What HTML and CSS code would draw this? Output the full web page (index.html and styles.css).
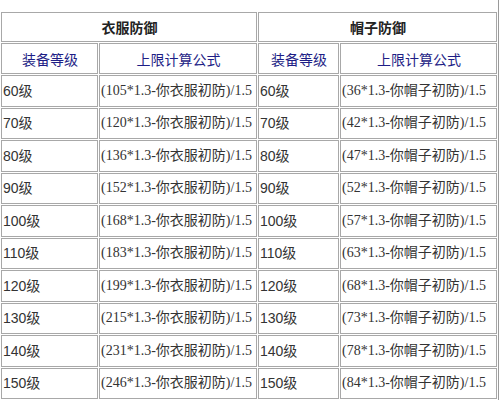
FILE: index.html
```html
<!DOCTYPE html>
<html>
<head>
<meta charset="utf-8">
<link rel="stylesheet" href="styles.css">
</head>
<body>
<div class="wrap">
<table class="grid">
<colgroup><col class="c1"><col class="c2"><col class="c3"><col class="c4"></colgroup>
<tr class="h1"><th colspan="2">衣服防御</th><th colspan="2">帽子防御</th></tr>
<tr class="h2"><td>装备等级</td><td>上限计算公式</td><td>装备等级</td><td>上限计算公式</td></tr>
<tr><td class="lv">60级</td><td class="f">(105*1.3-你衣服初防)/1.5</td><td class="lv">60级</td><td class="f">(36*1.3-你帽子初防)/1.5</td></tr>
<tr><td class="lv">70级</td><td class="f">(120*1.3-你衣服初防)/1.5</td><td class="lv">70级</td><td class="f">(42*1.3-你帽子初防)/1.5</td></tr>
<tr><td class="lv">80级</td><td class="f">(136*1.3-你衣服初防)/1.5</td><td class="lv">80级</td><td class="f">(47*1.3-你帽子初防)/1.5</td></tr>
<tr><td class="lv">90级</td><td class="f">(152*1.3-你衣服初防)/1.5</td><td class="lv">90级</td><td class="f">(52*1.3-你帽子初防)/1.5</td></tr>
<tr><td class="lv">100级</td><td class="f">(168*1.3-你衣服初防)/1.5</td><td class="lv">100级</td><td class="f">(57*1.3-你帽子初防)/1.5</td></tr>
<tr><td class="lv">110级</td><td class="f">(183*1.3-你衣服初防)/1.5</td><td class="lv">110级</td><td class="f">(63*1.3-你帽子初防)/1.5</td></tr>
<tr><td class="lv">120级</td><td class="f">(199*1.3-你衣服初防)/1.5</td><td class="lv">120级</td><td class="f">(68*1.3-你帽子初防)/1.5</td></tr>
<tr><td class="lv">130级</td><td class="f">(215*1.3-你衣服初防)/1.5</td><td class="lv">130级</td><td class="f">(73*1.3-你帽子初防)/1.5</td></tr>
<tr><td class="lv">140级</td><td class="f">(231*1.3-你衣服初防)/1.5</td><td class="lv">140级</td><td class="f">(78*1.3-你帽子初防)/1.5</td></tr>
<tr><td class="lv">150级</td><td class="f">(246*1.3-你衣服初防)/1.5</td><td class="lv">150级</td><td class="f">(84*1.3-你帽子初防)/1.5</td></tr>
</table>
</div>
</body>
</html>
```
FILE: styles.css
```css
html, body {
  margin: 0;
  padding: 0;
  background: #fff;
}
body {
  font-family: "Liberation Serif", "Noto Sans CJK SC", serif;
  font-size: 14px;
  color: #333;
}
.wrap {
  width: 498px;
  min-height: 400px;
  padding-top: 11px;
  border-right: 1px solid #9a9a9a;
  box-sizing: content-box;
}
.grid {
  width: 498px;
  table-layout: fixed;
  border-collapse: separate;
  border-spacing: 1px;
}
.c1 { width: 97px; }
.c2 { width: 158px; }
.c3 { width: 81px; }
.c4 { width: 157px; }
.grid td, .grid th {
  border: 1px solid #a8a8a8;
  padding: 0 0 0 1px;
  height: 31.5px;
  box-sizing: border-box;
  white-space: nowrap;
  overflow: hidden;
  line-height: 16px;
}
.h1 th {
  height: 30px;
  font-family: "Noto Sans CJK SC", sans-serif;
  font-weight: bold;
  font-size: 14px;
  color: #222;
  text-align: center;
}
.h2 td {
  height: 31px;
  font-family: "Noto Sans CJK SC", sans-serif;
  color: #1e1e86;
  text-align: center;
}
.lv {
  font-family: "Liberation Sans", "Noto Sans CJK SC", sans-serif;
}
.f {
  font-family: "Liberation Serif", "Noto Sans CJK SC", serif;
}
```
